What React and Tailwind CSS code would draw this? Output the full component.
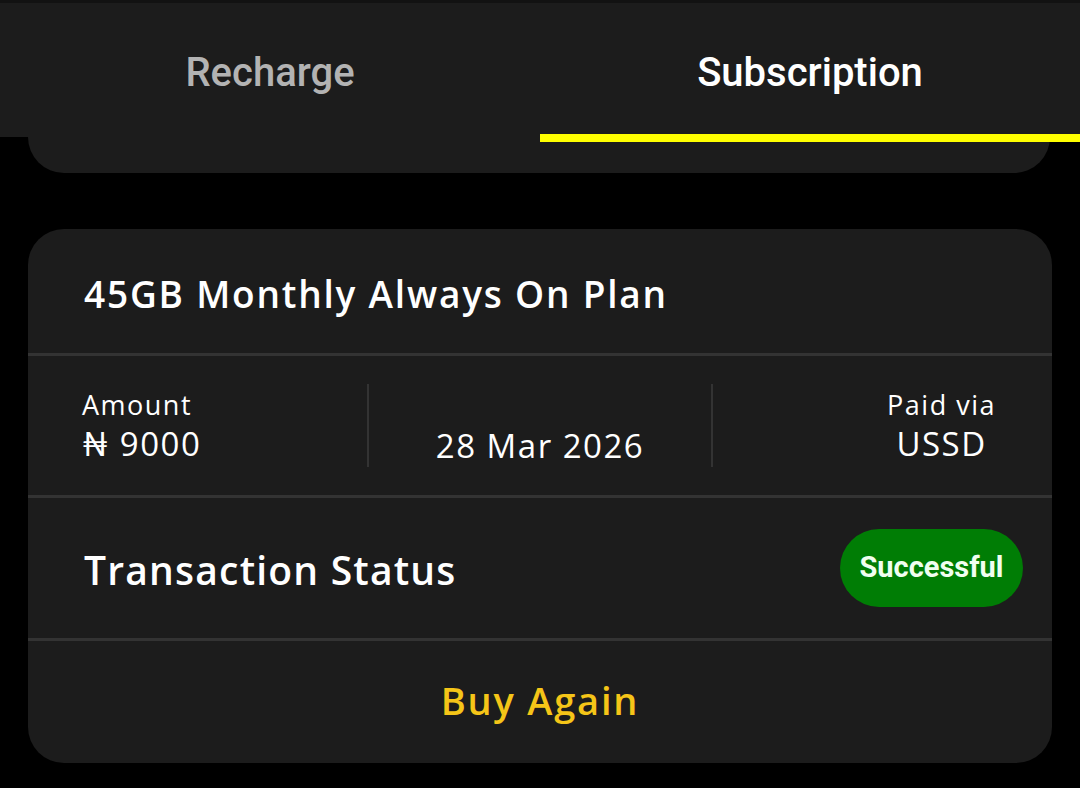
export default function App() {
  const body = { fontFamily: '"Open Sans", Lato, sans-serif' };
  const roboto = { fontFamily: 'Roboto, "Liberation Sans", sans-serif' };

  return (
    <div className="w-[1080px] h-[788px] bg-black overflow-hidden" style={body}>
      <div className="h-[3px] bg-[#121212]" />

      {/* tabs */}
      <div className="relative z-10 flex h-[134px] bg-[#1c1c1c]" style={roboto}>
        <div className="flex-1 flex items-center justify-center pt-[6px] text-[40px] font-medium text-[#b3b3b3]">
          Recharge
        </div>
        <div className="flex-1 flex items-center justify-center pt-[6px] text-[40px] font-medium text-white">
          Subscription
        </div>
        <div className="absolute right-0 bottom-[-5px] w-[540px] h-[8px] bg-[#ffff00]" />
      </div>

      {/* previous card, scrolled */}
      <div className="ml-[28px] w-[1022px] h-[36px] rounded-b-[36px] bg-[#1c1c1c]" />

      {/* transaction card */}
      <div className="ml-[28px] mt-[56px] w-[1024px] h-[534px] rounded-[36px] bg-[#1c1c1c] overflow-hidden flex flex-col text-white">
        <div className="h-[124px] flex items-center pl-[56px] pt-[6px] text-[37px] font-semibold tracking-[1.8px]">
          45GB Monthly Always On Plan
        </div>
        <div className="h-[3px] bg-[#333333]" />

        <div className="h-[139px] flex items-center">
          <div className="w-[339px] pl-[54px] flex flex-col gap-[8px] tracking-[1.5px]">
            <span className="text-[27px] leading-[28px]">Amount</span>
            <span className="text-[33px] leading-[34px]">₦ 9000</span>
          </div>
          <div className="w-[2px] h-[83px] bg-[#333333]" />
          <div className="w-[342px] flex justify-center pt-[40px] text-[33px] leading-[40px] tracking-[1.5px]">
            28 Mar 2026
          </div>
          <div className="w-[2px] h-[83px] bg-[#333333]" />
          <div className="flex-1 flex justify-end pr-[56px]">
            <div className="flex flex-col items-center gap-[8px] tracking-[1.5px]">
              <span className="text-[27px] leading-[28px]">Paid via</span>
              <span className="text-[33px] leading-[34px]">USSD</span>
            </div>
          </div>
        </div>
        <div className="h-[3px] bg-[#333333]" />

        <div className="h-[140px] flex items-center justify-between pl-[56px] pr-[29px]">
          <span className="text-[39px] font-semibold tracking-[1.2px] pt-[4px]">Transaction Status</span>
          <span
            className="h-[78px] w-[183px] rounded-full bg-[#007d05] flex items-center justify-center text-[29px] font-bold text-[#f0fff0]"
            style={roboto}
          >
            Successful
          </span>
        </div>
        <div className="h-[3px] bg-[#333333]" />

        <div className="flex-1 flex items-center justify-center pb-[4px] text-[38px] font-semibold tracking-[1.8px] text-[#f5c518]">
          Buy Again
        </div>
      </div>
    </div>
  );
}
